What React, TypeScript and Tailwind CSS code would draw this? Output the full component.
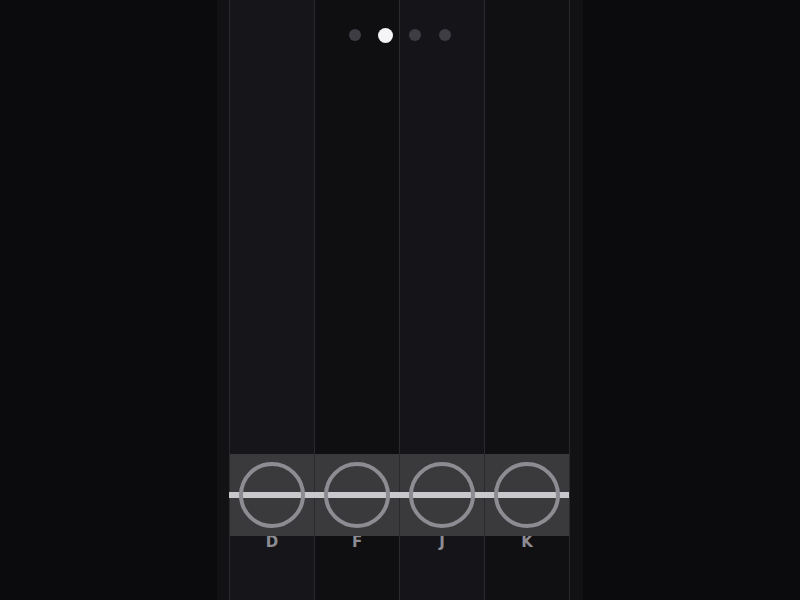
import React from "react";

const lanes = [
  { key: "D", bg: "bg-[#16161a]" },
  { key: "F", bg: "bg-[#0f0f12]" },
  { key: "J", bg: "bg-[#151519]" },
  { key: "K", bg: "bg-[#101013]" },
];

const pages = [false, true, false, false];

const Lane = ({ label, bg }: { label: string; bg: string }) => {
  return (
    <div className={`flex flex-col h-full w-[85px] border-l border-[#2a2a2e] ${bg}`}>
      <div className="h-[454px]" />
      <div className="relative h-[82px] bg-[#3a3a3d] flex items-center justify-center">
        <div className="absolute left-[-1px] right-0 top-[38px] h-[6px] bg-[#c9c9cd]" />
        <div className="relative w-[66px] h-[66px] rounded-full border-4 border-[#8c8c92]" />
      </div>
      <span
        className="text-center text-[15px] leading-[14px] mt-[-1px] font-bold text-[#8c8c92]"
        style={{ fontFamily: '"DejaVu Sans", "Noto Sans", sans-serif' }}
      >
        {label}
      </span>
    </div>
  );
};

export default function App() {
  return (
    <div className="w-full h-[600px] bg-[#0b0b0d] flex justify-center overflow-hidden">
      <div className="relative w-[366px] h-full pl-[12px] pr-[13px] bg-[#121215]">
        <div className="flex h-full border-r border-[#2a2a2e] w-fit">
          {lanes.map((lane) => (
            <Lane key={lane.key} label={lane.key} bg={lane.bg} />
          ))}
        </div>
        <div className="absolute top-[27px] left-0 right-0 flex justify-center">
          {pages.map((active, i) => (
            <div key={i} className="w-[30px] h-[16px] flex items-center justify-center">
              <span
                className={
                  active
                    ? "w-[15px] h-[15px] rounded-full bg-[#f4f4f6]"
                    : "w-[12px] h-[12px] rounded-full bg-[#3d3d43]"
                }
              />
            </div>
          ))}
        </div>
      </div>
    </div>
  );
}
